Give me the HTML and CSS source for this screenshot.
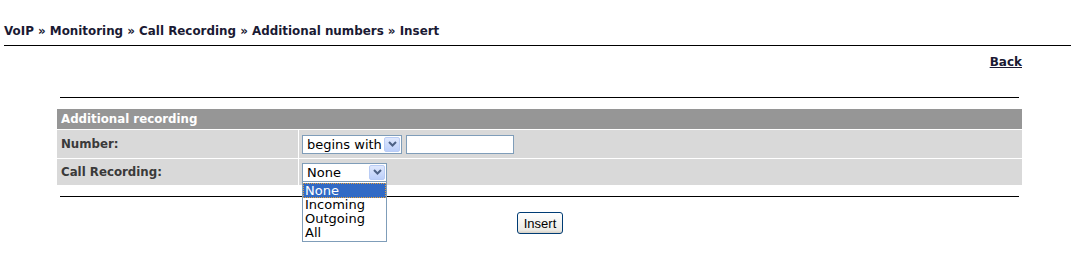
FILE: index.html
```html
<!DOCTYPE html>
<html>
<head>
<meta charset="utf-8">
<link rel="stylesheet" href="styles.css">
</head>
<body>
<div class="crumb">VoIP » Monitoring » Call Recording » Additional numbers » Insert</div>
<div class="toprule"></div>
<div class="backrow"><a href="#" class="back">Back</a></div>
<div class="content">
  <div class="hr"></div>
  <div class="grid">
    <div class="head">Additional recording</div>
    <div class="label row1">Number:</div>
    <div class="field row1">
      <div class="sel sel-begins"><span class="sel-text">begins with</span><span class="arrow"><svg width="9" height="6" viewBox="0 0 9 6"><path d="M1 1 L4.5 4.5 L8 1" fill="none" stroke="#4d6185" stroke-width="2"/></svg></span></div>
      <div class="txt"></div>
    </div>
    <div class="label row2">Call Recording:</div>
    <div class="field row2">
      <div class="selwrap">
        <div class="sel sel-rec"><span class="sel-text">None</span><span class="arrow"><svg width="9" height="6" viewBox="0 0 9 6"><path d="M1 1 L4.5 4.5 L8 1" fill="none" stroke="#4d6185" stroke-width="2"/></svg></span></div>
        <div class="list">
          <div class="opt selected">None</div>
          <div class="opt">Incoming</div>
          <div class="opt">Outgoing</div>
          <div class="opt">All</div>
        </div>
      </div>
    </div>
  </div>
  <div class="hr hr-bottom"></div>
  <div class="btnrow"><button class="btn">Insert</button></div>
</div>
</body>
</html>
```
FILE: styles.css
```css
html, body { margin: 0; padding: 0; background: #fff; }
body { font-family: "DejaVu Sans", Verdana, sans-serif; color: #000; min-height: 266px; }
.crumb { font-size: 11.9px; font-weight: bold; color: #1a1a33; padding: 24px 0 0 4px; height: 21px; line-height: 14px; box-sizing: content-box; }
.toprule { border-top: 1px solid #000; margin-left: 4px; height: 0; }
.backrow { text-align: right; padding-right: 49px; padding-top: 5px; height: 51px; box-sizing: border-box; }
.back { font-size: 12px; font-weight: bold; color: #1a1a33; text-decoration: underline; line-height: 14px; }
.content { margin: 0 49px 0 57px; }
.hr { border-top: 1px solid #000; margin: 0 3px; height: 0; }
.grid { display: grid; grid-template-columns: 241px 1fr; gap: 1px; margin-top: 11px; }
.head { grid-column: 1 / 3; background: #969696; color: #fff; font-size: 11.8px; font-weight: bold; height: 20px; line-height: 20px; padding-left: 4px; }
.label { background: #d9d9d9; color: #3a3a3a; font-size: 11.8px; font-weight: bold; padding-left: 4px; display: flex; align-items: center; }
.field { background: #d9d9d9; display: flex; align-items: center; padding-left: 3px; gap: 4px; }
.row1 { height: 28px; }
.row2 { height: 26px; }
.sel { box-sizing: border-box; height: 19px; border: 1px solid #7f9db9; background: #fff; display: flex; align-items: center; justify-content: space-between; padding: 0 1px 0 4px; font-size: 13px; }
.sel-begins { width: 100px; }
.sel-rec { width: 85px; }
.sel-text { line-height: 17px; }
.arrow { box-sizing: border-box; width: 16px; height: 15px; border: 1px solid #b9ccf5; border-radius: 2px; background: linear-gradient(#dfe8fd, #bccffa); display: flex; align-items: center; justify-content: center; }
.txt { box-sizing: border-box; width: 108px; height: 19px; border: 1px solid #7f9db9; background: #fff; }
.selwrap { position: relative; }
.list { position: absolute; left: 0; top: 19px; box-sizing: border-box; width: 85px; border: 1px solid #7f9db9; border-top: none; background: #fff; font-size: 13px; padding: 1px 0 1px 0; z-index: 2; }
.opt { height: 14px; line-height: 14px; padding-left: 2px; }
.opt.selected { background: #316ac5; color: #fff; outline: 1px dotted #e8a23c; outline-offset: -1px; height: 15px; line-height: 15px; }
.hr-bottom { margin-top: 11px; }
.btnrow { padding-left: 460px; padding-top: 15px; }
.btn { box-sizing: border-box; width: 46px; height: 22px; border: 1px solid #003c74; border-radius: 3px; background: linear-gradient(#ffffff, #ecebe6 85%, #d6d0c5); font-family: "Liberation Sans", Arial, sans-serif; font-size: 13px; color: #000; padding: 0; }
```
